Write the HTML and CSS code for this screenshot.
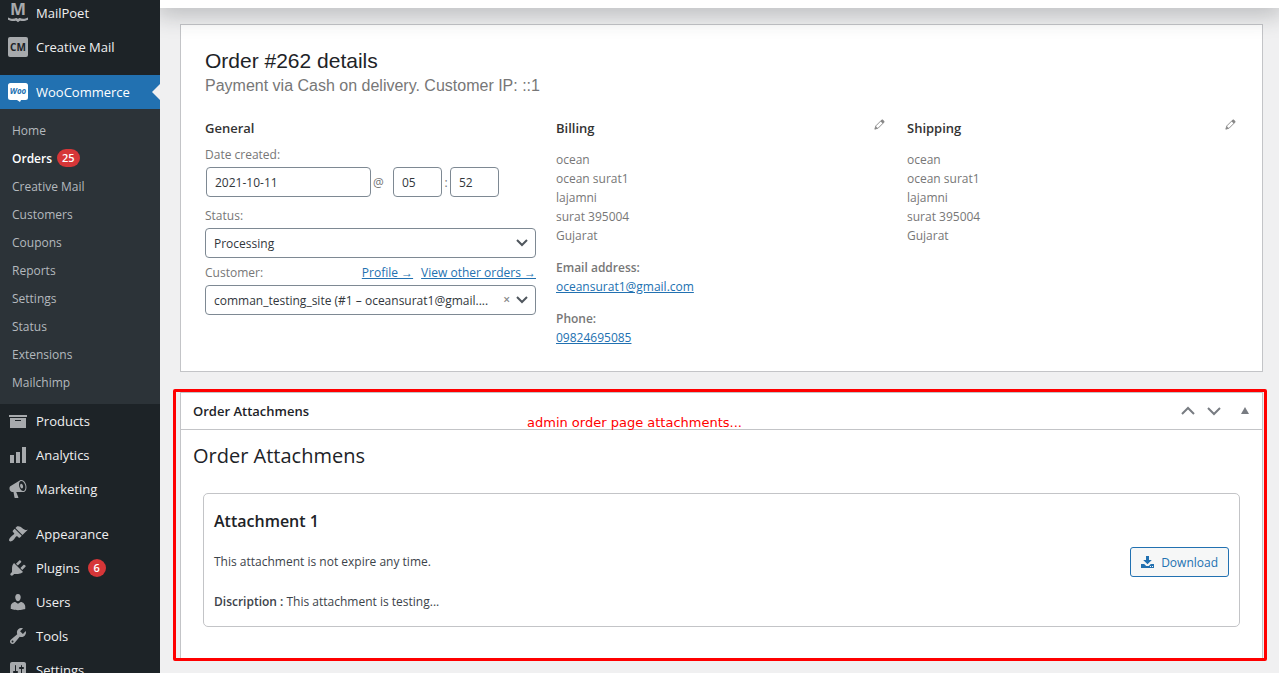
FILE: index.html
```html
<!DOCTYPE html>
<html lang="en">
<head>
<meta charset="utf-8">
<title>Order #262 details</title>
<link rel="stylesheet" href="styles.css">
</head>
<body>
<div class="layout">
  <nav class="sidebar" aria-label="Main menu">
    <a class="item" href="#"><svg class="icon" viewBox="0 0 20 20"><text class="mp-letter" x="10" y="12" text-anchor="middle">M</text><path d="M0 14.500c3.500 1.800 6.500 1.200 8 .6.800-.3 1.200.2 2 1 .8-.8 1.200-1.300 2-1 1.500.6 4.500 1.200 8-.6v2.200c-2.500 1.300-5.500 1.500-7.500 1-1-.2-1.500.8-2.500 1.500-1-.7-1.500-1.700-2.500-1.500-2 .5-5 .3-7.500-1z"/></svg>MailPoet</a>
    <a class="item" href="#"><svg class="icon" viewBox="0 0 20 20"><rect width="20" height="20" rx="2"/><text class="cm-letters" x="10" y="14" text-anchor="middle">CM</text></svg>Creative Mail</a>
    <a class="item current" href="#"><svg class="icon" viewBox="0 0 20 20"><path d="M2.500 1h15A2.500 2.500 0 0 1 20 3.500v12a2.500 2.500 0 0 1-2.500 2.500h-4.500l-1 2-3-2H2.500A2.500 2.500 0 0 1 0 15.500v-12A2.500 2.500 0 0 1 2.500 1z"/><text class="woo-letters" x="10" y="12" text-anchor="middle">Woo</text></svg>WooCommerce</a>
    <div class="submenu">
      <a href="#">Home</a>
      <a class="active" href="#">Orders <span class="badge">25</span></a>
      <a href="#">Creative Mail</a>
      <a href="#">Customers</a>
      <a href="#">Coupons</a>
      <a href="#">Reports</a>
      <a href="#">Settings</a>
      <a href="#">Status</a>
      <a href="#">Extensions</a>
      <a href="#">Mailchimp</a>
    </div>
    <a class="item" href="#"><svg class="icon" viewBox="0 0 20 20"><path d="M19 4v2H1V4h18zM2 7h16v10H2V7zm11 3V9H7v1h6z"/></svg>Products</a>
    <a class="item" href="#"><svg class="icon" viewBox="0 0 20 20"><path d="M18 18V2h-4v16h4zm-6 0V7H8v11h4zm-6 0v-8H2v8h4z"/></svg>Analytics</a>
    <a class="item" href="#"><svg class="icon" viewBox="0 0 20 20"><path d="M18.150 5.940c.46 1.620.38 3.220-.02 4.480-.42 1.280-1.260 2.180-2.300 2.480-.16.06-.26.06-.4.06-.06.02-.12.02-.18.02-.06.02-.14.02-.22.02h-6.800l2.220 5.500c.02.14-.06.26-.14.34-.08.1-.24.16-.34.16H6.950c-.1 0-.26-.06-.34-.16-.08-.08-.16-.2-.14-.34l-1-5.500H4.250l-.02-.02c-.5.06-1.080-.18-1.540-.62s-.88-1.080-1.060-1.880c-.24-.8-.2-1.560-.02-2.200.18-.62.58-1.080 1.060-1.300l.02-.02 9-5.400c.1-.06.18-.1.24-.16.06-.04.14-.08.24-.12.16-.08.28-.12.5-.18 1.040-.3 2.240.1 3.220.98s1.840 2.240 2.260 3.860zm-2.580 5.980h-.02c.4-.1.74-.34 1.040-.7.58-.7.86-1.760.86-3.040 0-.64-.1-1.300-.28-1.980-.34-1.360-1.020-2.500-1.780-3.240s-1.680-1.100-2.460-.88c-.82.22-1.400.96-1.700 2-.32 1.040-.28 2.360.06 3.720.38 1.360 1 2.500 1.800 3.240.78.74 1.620 1.100 2.480.88zm-2.540-7.080c.22-.04.42-.02.62.04.38.16.76.48 1.020 1s.42 1.200.42 1.780c0 .3-.04.56-.12.8-.18.48-.44.84-.86.94-.34.1-.8-.06-1.140-.4s-.64-.86-.78-1.500c-.18-.62-.12-1.240.02-1.720s.48-.84.82-.94z"/></svg>Marketing</a>
    <a class="item spaced" href="#"><svg class="icon" viewBox="0 0 20 20"><path d="M14.480 11.060L7.410 3.990l1.500-1.500c.5-.56 2.300-.47 3.510.32 1.210.8 1.430 1.280 2.910 2.100 1.180.64 2.450 1.260 4.450.85zm-.71.71L6.700 4.700 4.930 6.470c-.39.39-.39 1.020 0 1.410l1.060 1.060c.39.39.39 1.030 0 1.420-.6.6-1.430 1.110-2.210 1.690-.35.26-.7.53-1.010.84C1.430 14.230.4 16.080 1.400 17.070c.99 1 2.840-.03 4.180-1.360.31-.31.58-.66.85-1.020.57-.78 1.080-1.610 1.690-2.210.39-.39 1.020-.39 1.410 0l1.060 1.060c.39.39 1.020.39 1.410 0z"/></svg>Appearance</a>
    <a class="item" href="#"><svg class="icon" viewBox="0 0 20 20"><path d="M13.110 4.360L9.870 7.600 8 5.730l3.240-3.240c.35-.34 1.050-.2 1.560.32.52.51.66 1.210.31 1.550zm-8 1.770l.91-1.120 9.010 9.010-1.190.84c-.71.71-2.630 1.160-3.820 1.160H6.140L4.900 17.260c-.59.59-1.540.59-2.120 0-.59-.58-.59-1.530 0-2.120l1.240-1.240v-3.880c0-1.130.4-3.190 1.090-3.890zm7.260 3.970l3.240-3.240c.34-.35 1.040-.21 1.550.31.52.51.66 1.210.31 1.550l-3.240 3.250z"/></svg>Plugins <span class="badge">6</span></a>
    <a class="item" href="#"><svg class="icon" viewBox="0 0 20 20"><path d="M10 9.250c-2.270 0-2.730-3.440-2.730-3.440C7 4.020 7.820 2 9.970 2c2.160 0 2.980 2.020 2.710 3.810 0 0-.41 3.440-2.680 3.440zm0 2.570L12.720 10c2.390 0 4.520 2.330 4.520 4.530v2.490s-3.650 1.130-7.240 1.130c-3.650 0-7.240-1.130-7.240-1.130v-2.490c0-2.250 1.940-4.480 4.470-4.480z"/></svg>Users</a>
    <a class="item" href="#"><svg class="icon" viewBox="0 0 20 20"><path d="M16.680 9.770c-1.340 1.340-3.300 1.670-4.950.99l-5.410 6.520c-.99.99-2.590.99-3.580 0s-.99-2.590 0-3.570l6.520-5.420c-.68-1.650-.35-3.610.99-4.950 1.280-1.280 3.120-1.620 4.720-1.060l-2.890 2.890 2.820 2.820 2.860-2.870c.53 1.580.18 3.390-1.080 4.650zM3.810 16.210c.4.39 1.040.39 1.430 0 .4-.4.4-1.040 0-1.430-.39-.4-1.030-.4-1.430 0-.39.39-.39 1.030 0 1.430z"/></svg>Tools</a>
    <a class="item" href="#"><svg class="icon" viewBox="0 0 20 20"><path d="M18 16V4c0-1.100-.9-2-2-2H4c-1.100 0-2 .9-2 2v12c0 1.100.9 2 2 2h12c1.100 0 2-.9 2-2zM8 11h1c.55 0 1 .45 1 1s-.45 1-1 1H8v1.500c0 .28-.22.5-.5.5s-.5-.22-.5-.5V13H6c-.55 0-1-.45-1-1s.45-1 1-1h1V5.500c0-.28.22-.5.5-.5s.5.22.5.5V11zm5-2h-1c-.55 0-1-.45-1-1s.45-1 1-1h1V5.500c0-.28.22-.5.5-.5s.5.22.5.5V7h1c.55 0 1 .45 1 1s-.45 1-1 1h-1v5.500c0 .28-.22.5-.5.5s-.5-.22-.5-.5V9z"/></svg>Settings</a>
  </nav>

  <main class="main">
    <div class="topbar"></div>
    <section class="panel order">
      <h1>Order #262 details</h1>
      <p class="meta">Payment via Cash on delivery. Customer IP: ::1</p>
      <div class="columns">
        <div class="column">
          <h3>General</h3>
          <label class="label" for="date">Date created:</label>
          <div class="date-row">
            <input class="field date" id="date" type="text" value="2021-10-11"><span class="at">@</span>
            <input class="field time" type="text" value="05" aria-label="Hour"><span class="colon">:</span>
            <input class="field time" type="text" value="52" aria-label="Minute">
          </div>
          <label class="label" for="status">Status:</label>
          <div class="select-wrap">
            <select class="field select" id="status"><option>Processing</option></select>
            <svg class="chevron" viewBox="0 0 12 8"><path d="M1 1l5 5 5-5"/></svg>
          </div>
          <div class="label customer-row">
            <label for="customer">Customer:</label>
            <span class="links"><a href="#">Profile →</a><a href="#">View other orders →</a></span>
          </div>
          <div class="select-wrap">
            <select class="field select clearable" id="customer"><option>comman_testing_site (#1 – oceansurat1@gmail....</option></select>
            <button class="clear" type="button" aria-label="Clear customer">×</button>
            <svg class="chevron" viewBox="0 0 12 8"><path d="M1 1l5 5 5-5"/></svg>
          </div>
        </div>
        <div class="column">
          <div class="column-head"><h3>Billing</h3>
            <button class="edit" type="button" aria-label="Edit billing"><svg viewBox="0 0 12 12"><path d="M1 11l1-3.500L8 1.500q1-1 2.200.3t.3 2.200L4.500 10z"/><path class="tip" d="M7 2.500l1.200-1.300q1-.8 2.200.4t.4 2.200L9.500 5zM.6 11.400L2 8l2 2z"/></svg></button></div>
          <address>ocean<br>ocean surat1<br>lajamni<br>surat 395004<br>Gujarat</address>
          <p class="contact"><strong>Email address:</strong><br><a href="#">oceansurat1@gmail.com</a></p>
          <p class="contact"><strong>Phone:</strong><br><a href="#">09824695085</a></p>
        </div>
        <div class="column">
          <div class="column-head"><h3>Shipping</h3>
            <button class="edit" type="button" aria-label="Edit shipping"><svg viewBox="0 0 12 12"><path d="M1 11l1-3.500L8 1.500q1-1 2.200.3t.3 2.200L4.500 10z"/><path class="tip" d="M7 2.500l1.200-1.300q1-.8 2.200.4t.4 2.200L9.500 5zM.6 11.400L2 8l2 2z"/></svg></button></div>
          <address>ocean<br>ocean surat1<br>lajamni<br>surat 395004<br>Gujarat</address>
        </div>
      </div>
    </section>

    <section class="panel metabox">
      <header class="metabox-head">
        <h2>Order Attachmens</h2>
        <div class="handles">
          <button type="button" aria-label="Move up"><svg width="14" height="10" viewBox="0 0 14 10"><path class="stroke" d="M1 8l6-6 6 6"/></svg></button>
          <button type="button" aria-label="Move down"><svg width="14" height="10" viewBox="0 0 14 10"><path class="stroke" d="M1 2l6 6 6-6"/></svg></button>
          <button class="toggle" type="button" aria-label="Toggle panel"><svg width="8" height="8" viewBox="0 0 8 8"><path d="M4 0l4 7H0z"/></svg></button>
        </div>
      </header>
      <div class="metabox-body">
        <h2 class="title">Order Attachmens</h2>
        <article class="attachment">
          <div class="attachment-text">
            <h3>Attachment 1</h3>
            <p>This attachment is not expire any time.</p>
            <p><strong>Discription :</strong> This attachment is testing...</p>
          </div>
          <button class="download" type="button"><svg width="13" height="12" viewBox="0 0 13 12"><path d="M5 0h3v4h2.800L6.500 8.200 2.200 4H5zM0 8h3.200l2 2h2.600l2-2H13v4H0zm9 2v1h1v-1zm2 0v1h1v-1z"/></svg>Download</button>
        </article>
      </div>
      <div class="highlight"></div>
      <div class="note">admin order page attachments...</div>
    </section>
  </main>
</div>
</body>
</html>
```
FILE: styles.css
```css
* { box-sizing: border-box; }
body {
  margin: 0;
  background: #f0f0f1;
  color: #3c434a;
  font: 12px/19px "Open Sans", "Noto Sans", sans-serif;
}
h1, h2, h3, p { margin: 0; }
a { color: #2271b1; }
button, input, select { font: inherit; }
button { padding: 0; border: 0; background: none; cursor: pointer; }
strong { font-weight: 600; }

.layout { display: flex; height: 100vh; overflow: hidden; }

.sidebar { flex: none; width: 160px; margin-top: -4px; background: #1d2327; }
.item {
  position: relative;
  display: flex;
  align-items: center;
  gap: 8px;
  height: 34px;
  padding: 0 8px;
  color: #f0f0f1;
  font-size: 13px;
  text-decoration: none;
}
.icon { flex: none; width: 20px; height: 20px; fill: #a7aaad; }
.mp-letter { font: bold 17px "Open Sans", sans-serif; }
.cm-letters { font: bold 10px "Open Sans", sans-serif; fill: #1d2327; }
.woo-letters { font: italic bold 8px "Open Sans", sans-serif; fill: #2271b1; }
.item.current { margin-top: 11px; background: #2271b1; color: #fff; }
.item.current .icon { fill: #fff; }
.item.current::after {
  content: "";
  position: absolute;
  right: 0;
  top: 9px;
  border: 8px solid transparent;
  border-left: 0;
  border-right-color: #f0f0f1;
}
.item.spaced { margin-top: 11px; }
.submenu { padding: 7px 0 8px; background: #2c3338; }
.submenu a {
  display: flex;
  align-items: center;
  gap: 5px;
  height: 28px;
  padding: 0 12px;
  color: #b4b9be;
  text-decoration: none;
}
.submenu .active { color: #fff; font-weight: 600; }
.badge {
  min-width: 18px;
  padding: 0 5px;
  border-radius: 9px;
  background: #d63638;
  color: #fff;
  font-size: 11px;
  font-weight: 600;
  line-height: 18px;
  text-align: center;
}

.main { flex: 1; min-width: 0; }
.topbar { position: relative; height: 8px; background: #fff; box-shadow: 0 0 24px 4px #2c333866; clip-path: inset(0 0 -40px 0); }
.panel { margin: 0 16px 0 20px; border: 1px solid #c3c4c7; background: #fff; }

.order { margin-top: 16px; padding: 24px; }
.order h1 { color: #1d2327; font: 21px/24px "Liberation Sans", Arial, sans-serif; }
.meta { color: #777; font: 16px/26px "Liberation Sans", Arial, sans-serif; }
.columns { display: grid; grid-template-columns: repeat(3, minmax(0, 1fr)); gap: 20px; margin-top: 18px; color: #777; }
.column h3 { color: #333; font-size: 13px; font-weight: 600; line-height: 22px; }
.column > h3 { margin-bottom: 6px; }
.label { display: block; line-height: 20px; }
.date-row { display: flex; align-items: center; margin: 2px 0 9px 1px; }
.field {
  height: 30px;
  padding: 0 8px;
  border: 1px solid #7e8993;
  border-radius: 4px;
  background: #fff;
  color: #32373c;
}
.date { width: 165px; }
.time { width: 49px; }
.at { width: 22px; padding-left: 2px; }
.colon { width: 8px; text-align: center; }
.select-wrap { position: relative; margin: 2px 0 5px; }
.select { width: 100%; appearance: none; text-overflow: ellipsis; }
.clearable { padding-right: 38px; }
.chevron { position: absolute; right: 8px; top: 11px; width: 12px; height: 8px; fill: none; stroke: #50575e; stroke-width: 2; pointer-events: none; }
.clear { position: absolute; right: 26px; top: 5px; color: #888; font-weight: 600; }
.customer-row { display: flex; justify-content: space-between; }
.links { display: flex; gap: 8px; }
.column-head { display: flex; justify-content: space-between; align-items: flex-start; margin-bottom: 11px; }
.edit { width: 13px; height: 14px; line-height: 0; text-align: left; }
.edit svg { width: 11px; height: 11px; fill: none; stroke: #888; }
.edit .tip { fill: #888; stroke: none; }
address { font-style: normal; }
.contact { margin-top: 13px; }

.metabox { position: relative; height: 269px; margin-top: 20px; }
.metabox-head { display: flex; justify-content: space-between; align-items: center; height: 37px; padding: 0 13px 0 12px; border-bottom: 1px solid #c3c4c7; }
.metabox-head h2 { color: #1d2327; font-size: 13px; font-weight: 600; }
.handles { display: flex; align-items: center; gap: 12px; }
.handles button { display: flex; }
.handles .toggle { margin-left: 8px; }
.handles svg { fill: #787c82; }
.handles .stroke { fill: none; stroke: #787c82; stroke-width: 2; }
.metabox-body { padding: 12px; }
.title { color: #1d2327; font-size: 20px; font-weight: 400; line-height: 28px; }
.attachment {
  display: flex;
  align-items: center;
  justify-content: space-between;
  margin: 23px 10px 0;
  padding: 16px 10px 14px;
  border: 1px solid #c3c4c7;
  border-radius: 5px;
}
.attachment h3 { color: #1d2327; font-size: 16px; font-weight: 600; line-height: 22px; }
.attachment p { margin-top: 20px; line-height: 20px; }
.download {
  display: flex;
  align-items: center;
  gap: 7px;
  height: 30px;
  margin-top: 2px;
  padding: 0 10px;
  border: 1px solid #2271b1;
  border-radius: 3px;
  background: #f6f7f7;
  color: #2271b1;
}
.download svg { fill: #2271b1; }
.highlight { position: absolute; inset: -4px -5px -1px -8px; border: 3px solid #f00; border-radius: 2px; pointer-events: none; }
.note { position: absolute; left: 346px; top: 20px; color: #f00; font: 13px/20px "DejaVu Sans", sans-serif; }
```
